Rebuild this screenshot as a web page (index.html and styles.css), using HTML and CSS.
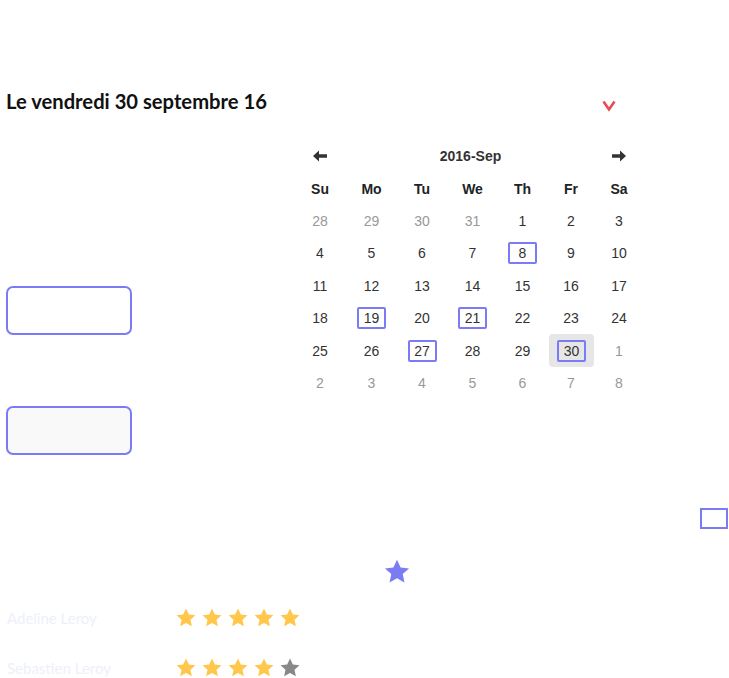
FILE: index.html
```html
<!DOCTYPE html>
<html lang="fr">
<head>
    <meta charset="UTF-8">
    <meta name="viewport" content="width=device-width, initial-scale=1.0">
    <title>Agenda</title>
    <link rel="stylesheet" href="styles.css">
</head>
<body>
    <div class="page">
        <div class="top-bar">
            <h1 class="date-title">Le vendredi 30 septembre 16</h1>
            <svg class="chevron" width="14" height="12" viewBox="0 0 14 12">
                <polyline points="1.5,1.5 7,9.5 12.5,1.5" fill="none" stroke="#e94b55" stroke-width="2.6"/>
            </svg>
        </div>

        <div class="content">
            <div class="side">
                <button class="slot"></button>
                <button class="slot slot-grey"></button>
            </div>

            <div class="calendar">
                <div class="cal-nav">
                    <svg width="16" height="12" viewBox="0 0 16 12"><path d="M1 6 L7 0.5 L7 4.3 L15 4.3 L15 7.7 L7 7.7 L7 11.5 Z" fill="#333"/></svg>
                </div>
                <div class="cal-month">2016-Sep</div>
                <div class="cal-nav">
                    <svg width="16" height="12" viewBox="0 0 16 12"><path d="M15 6 L9 0.5 L9 4.3 L1 4.3 L1 7.7 L9 7.7 L9 11.5 Z" fill="#333"/></svg>
                </div>

                <div class="dow">Su</div><div class="dow">Mo</div><div class="dow">Tu</div><div class="dow">We</div><div class="dow">Th</div><div class="dow">Fr</div><div class="dow">Sa</div>

                <div class="day old">28</div><div class="day old">29</div><div class="day old">30</div><div class="day old">31</div><div class="day">1</div><div class="day">2</div><div class="day">3</div>
                <div class="day">4</div><div class="day">5</div><div class="day">6</div><div class="day">7</div><div class="day"><span class="mark">8</span></div><div class="day">9</div><div class="day">10</div>
                <div class="day">11</div><div class="day">12</div><div class="day">13</div><div class="day">14</div><div class="day">15</div><div class="day">16</div><div class="day">17</div>
                <div class="day">18</div><div class="day"><span class="mark">19</span></div><div class="day">20</div><div class="day"><span class="mark">21</span></div><div class="day">22</div><div class="day">23</div><div class="day">24</div>
                <div class="day">25</div><div class="day">26</div><div class="day"><span class="mark">27</span></div><div class="day">28</div><div class="day">29</div><div class="day active"><span class="mark">30</span></div><div class="day old">1</div>
                <div class="day old">2</div><div class="day old">3</div><div class="day old">4</div><div class="day old">5</div><div class="day old">6</div><div class="day old">7</div><div class="day old">8</div>
            </div>
        </div>

        <div class="tiny-row">
            <div class="tiny-box"></div>
        </div>

        <div class="fav-row">
            <svg width="28" height="28" viewBox="0 0 24 24"><polygon points="12,1.5 15.1,8.1 22.3,8.9 16.9,13.8 18.4,21 12,17.4 5.6,21 7.1,13.8 1.7,8.9 8.9,8.1" fill="#7b7bf4"/></svg>
        </div>

        <div class="reviews">
            <div class="review">
                <span class="reviewer">Adeline Leroy</span>
                <div class="stars">
                    <svg class="star on" viewBox="0 0 24 24"><polygon points="12,1.5 15.1,8.1 22.3,8.9 16.9,13.8 18.4,21 12,17.4 5.6,21 7.1,13.8 1.7,8.9 8.9,8.1"/></svg>
                    <svg class="star on" viewBox="0 0 24 24"><polygon points="12,1.5 15.1,8.1 22.3,8.9 16.9,13.8 18.4,21 12,17.4 5.6,21 7.1,13.8 1.7,8.9 8.9,8.1"/></svg>
                    <svg class="star on" viewBox="0 0 24 24"><polygon points="12,1.5 15.1,8.1 22.3,8.9 16.9,13.8 18.4,21 12,17.4 5.6,21 7.1,13.8 1.7,8.9 8.9,8.1"/></svg>
                    <svg class="star on" viewBox="0 0 24 24"><polygon points="12,1.5 15.1,8.1 22.3,8.9 16.9,13.8 18.4,21 12,17.4 5.6,21 7.1,13.8 1.7,8.9 8.9,8.1"/></svg>
                    <svg class="star on" viewBox="0 0 24 24"><polygon points="12,1.5 15.1,8.1 22.3,8.9 16.9,13.8 18.4,21 12,17.4 5.6,21 7.1,13.8 1.7,8.9 8.9,8.1"/></svg>
                </div>
            </div>
            <div class="review">
                <span class="reviewer">Sebastien Leroy</span>
                <div class="stars">
                    <svg class="star on" viewBox="0 0 24 24"><polygon points="12,1.5 15.1,8.1 22.3,8.9 16.9,13.8 18.4,21 12,17.4 5.6,21 7.1,13.8 1.7,8.9 8.9,8.1"/></svg>
                    <svg class="star on" viewBox="0 0 24 24"><polygon points="12,1.5 15.1,8.1 22.3,8.9 16.9,13.8 18.4,21 12,17.4 5.6,21 7.1,13.8 1.7,8.9 8.9,8.1"/></svg>
                    <svg class="star on" viewBox="0 0 24 24"><polygon points="12,1.5 15.1,8.1 22.3,8.9 16.9,13.8 18.4,21 12,17.4 5.6,21 7.1,13.8 1.7,8.9 8.9,8.1"/></svg>
                    <svg class="star on" viewBox="0 0 24 24"><polygon points="12,1.5 15.1,8.1 22.3,8.9 16.9,13.8 18.4,21 12,17.4 5.6,21 7.1,13.8 1.7,8.9 8.9,8.1"/></svg>
                    <svg class="star" viewBox="0 0 24 24"><polygon points="12,1.5 15.1,8.1 22.3,8.9 16.9,13.8 18.4,21 12,17.4 5.6,21 7.1,13.8 1.7,8.9 8.9,8.1"/></svg>
                </div>
            </div>
        </div>
    </div>
</body>
</html>
```

FILE: styles.css
```css
body {
    margin: 0;
    padding: 0;
    background: #fff;
    font-family: Lato, "Open Sans", sans-serif;
}
.page {
    width: 729px;
    height: 678px;
    overflow: hidden;
}
.top-bar {
    display: flex;
    align-items: center;
    width: 610px;
    padding: 89px 0 0 6px;
}
.date-title {
    flex: 1;
    margin: 0;
    font-size: 20.2px;
    line-height: 24px;
    font-weight: bold;
    color: #111;
}
.chevron {
    margin-top: 9px;
}
.content {
    display: flex;
    margin-top: 27px;
}
.side {
    width: 294px;
    padding-left: 6px;
    box-sizing: border-box;
    display: flex;
    flex-direction: column;
}
.slot {
    width: 126px;
    height: 49px;
    margin-top: 146px;
    background: #fff;
    border: 2px solid #7b7bf6;
    border-radius: 7px;
    padding: 0;
}
.slot + .slot {
    margin-top: 71px;
}
.slot-grey {
    background: #f9f9f9;
}
.calendar {
    display: grid;
    grid-template-columns: 52px 51px 50px 51px 49px 48px 48px;
    grid-auto-rows: 32.4px;
    font-family: "Liberation Sans", Arial, sans-serif;
    font-size: 14px;
    color: #333;
}
.cal-nav {
    display: flex;
    align-items: center;
    justify-content: center;
}
.cal-month {
    grid-column: span 5;
    display: flex;
    align-items: center;
    justify-content: center;
    font-weight: bold;
}
.dow {
    display: flex;
    align-items: center;
    justify-content: center;
    font-weight: bold;
    color: #222;
}
.day {
    display: flex;
    align-items: center;
    justify-content: center;
}
.old {
    color: #999;
}
.mark {
    display: flex;
    align-items: center;
    justify-content: center;
    width: 29px;
    height: 22px;
    box-sizing: border-box;
    border: 2px solid #7b7bf6;
    border-radius: 2px;
}
.active {
    background: #e6e6e6;
    border-radius: 4px;
    margin: 0 1px 0 2px;
}
.tiny-row {
    display: flex;
    justify-content: flex-end;
    padding-right: 1px;
    margin-top: 53px;
}
.tiny-box {
    width: 28px;
    height: 21px;
    box-sizing: border-box;
    border: 2px solid #7b7bf6;
}
.fav-row {
    padding-left: 383px;
    margin-top: 29px;
    height: 28px;
}
.reviews {
    margin-top: 7px;
}
.review {
    display: flex;
    align-items: center;
    height: 50px;
}
.reviewer {
    width: 175px;
    padding-left: 7px;
    box-sizing: border-box;
    font-size: 15px;
    color: #edf0fb;
}
.stars {
    display: flex;
    gap: 4px;
}
.star {
    width: 22px;
    height: 22px;
    fill: #888;
}
.star.on {
    fill: #ffc84d;
}
```
